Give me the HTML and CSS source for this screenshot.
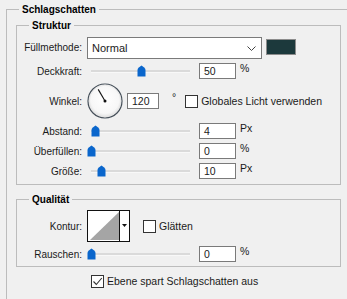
FILE: index.html
```html
<!DOCTYPE html>
<html>
  <head>
    <link rel="stylesheet" href="styles.css">
  </head>
  <body>
    <fieldset class="group outer">
      <legend>Schlagschatten</legend>

      <fieldset class="group inner struktur">
        <legend>Struktur</legend>

        <div class="row row-mode">
          <label class="lbl">Füllmethode:</label>
          <div class="select">
            <span>Normal</span>
            <svg class="chevron" width="9" height="5" viewBox="0 0 9 5">
              <path d="M0.5 0.5 L4.5 4.5 L8.5 0.5" fill="none" stroke="#444" stroke-width="1"/>
            </svg>
          </div>
          <div class="swatch"></div>
        </div>

        <div class="row">
          <label class="lbl">Deckkraft:</label>
          <div class="slider">
            <div class="track"></div>
            <svg class="thumb" style="left: 50px" width="9" height="12" viewBox="0 0 9 12">
              <path d="M0.5 11.5 V5 Q0.5 3.6 1.8 2.5 L4.5 0.4 L7.2 2.5 Q8.5 3.6 8.5 5 V11.5 Z" fill="#0a66cc"/>
            </svg>
          </div>
          <div class="num">50</div>
          <span class="unit">%</span>
        </div>

        <div class="row row-angle">
          <label class="lbl">Winkel:</label>
          <svg class="dial" width="36" height="36" viewBox="0 0 36 36">
            <defs>
              <radialGradient id="dialFill" cx="50%" cy="45%" r="55%">
                <stop offset="0%" stop-color="#ffffff"/>
                <stop offset="75%" stop-color="#f7f7f7"/>
                <stop offset="100%" stop-color="#dcdcdc"/>
              </radialGradient>
            </defs>
            <circle cx="18" cy="18" r="17" fill="url(#dialFill)" stroke="#46505a" stroke-width="1.2"/>
            <circle cx="18" cy="18" r="15.8" fill="none" stroke="#e4e4e4" stroke-width="0.8"/>
            <line x1="18" y1="18" x2="11.2" y2="6.4" stroke="#111" stroke-width="1.1"/>
            <circle cx="18" cy="18" r="1.5" fill="#111"/>
          </svg>
          <div class="num num-angle">120</div>
          <span class="unit unit-deg">°</span>
          <span class="check"></span>
          <span class="check-text">Globales Licht verwenden</span>
        </div>

        <div class="row">
          <label class="lbl">Abstand:</label>
          <div class="slider">
            <div class="track"></div>
            <svg class="thumb" style="left: 4px" width="9" height="12" viewBox="0 0 9 12">
              <path d="M0.5 11.5 V5 Q0.5 3.6 1.8 2.5 L4.5 0.4 L7.2 2.5 Q8.5 3.6 8.5 5 V11.5 Z" fill="#0a66cc"/>
            </svg>
          </div>
          <div class="num">4</div>
          <span class="unit">Px</span>
        </div>

        <div class="row">
          <label class="lbl">Überfüllen:</label>
          <div class="slider">
            <div class="track"></div>
            <svg class="thumb" style="left: 0px" width="9" height="12" viewBox="0 0 9 12">
              <path d="M0.5 11.5 V5 Q0.5 3.6 1.8 2.5 L4.5 0.4 L7.2 2.5 Q8.5 3.6 8.5 5 V11.5 Z" fill="#0a66cc"/>
            </svg>
          </div>
          <div class="num">0</div>
          <span class="unit">%</span>
        </div>

        <div class="row">
          <label class="lbl">Größe:</label>
          <div class="slider">
            <div class="track"></div>
            <svg class="thumb" style="left: 10px" width="9" height="12" viewBox="0 0 9 12">
              <path d="M0.5 11.5 V5 Q0.5 3.6 1.8 2.5 L4.5 0.4 L7.2 2.5 Q8.5 3.6 8.5 5 V11.5 Z" fill="#0a66cc"/>
            </svg>
          </div>
          <div class="num">10</div>
          <span class="unit">Px</span>
        </div>
      </fieldset>

      <fieldset class="group inner quality">
        <legend>Qualität</legend>

        <div class="row row-contour">
          <label class="lbl">Kontur:</label>
          <svg class="contour" width="43" height="32" viewBox="0 0 43 32">
            <rect x="0.5" y="0.5" width="42" height="31" fill="#fff" stroke="#111"/>
            <polygon points="3,30 32,2 32,30" fill="#a5a5a5"/>
            <line x1="32.5" y1="0" x2="32.5" y2="32" stroke="#111"/>
            <polygon points="35,14 40,14 37.5,17" fill="#111"/>
          </svg>
          <span class="check check-smooth"></span>
          <span class="check-text">Glätten</span>
        </div>

        <div class="row">
          <label class="lbl">Rauschen:</label>
          <div class="slider">
            <div class="track"></div>
            <svg class="thumb" style="left: 0px" width="9" height="12" viewBox="0 0 9 12">
              <path d="M0.5 11.5 V5 Q0.5 3.6 1.8 2.5 L4.5 0.4 L7.2 2.5 Q8.5 3.6 8.5 5 V11.5 Z" fill="#0a66cc"/>
            </svg>
          </div>
          <div class="num">0</div>
          <span class="unit">%</span>
        </div>
      </fieldset>

      <div class="row row-knockout">
        <span class="check checked">
          <svg width="11" height="11" viewBox="0 0 11 11">
            <path d="M1.5 5.5 L4.3 8.5 L9.8 2" fill="none" stroke="#333" stroke-width="1.1"/>
          </svg>
        </span>
        <span class="check-text">Ebene spart Schlagschatten aus</span>
      </div>
    </fieldset>
  </body>
</html>
```

FILE: styles.css
```css
body {
  margin: 0;
  background-color: #f0f0f0;
  font-family: "Liberation Sans", Arial, sans-serif;
  font-size: 10px;
  color: #1a1a1a;
  overflow: hidden;
}

.group {
  border: 1px solid #bcbcbc;
  min-inline-size: 0;
}
.group legend {
  font-weight: bold;
  line-height: 13px;
  padding: 0 3px;
  color: #000;
}

.outer {
  margin: 3px -20px 0 6px;
  padding: 3px 0 40px 9px;
}
.outer > legend {
  margin-left: 3px;
}

.inner {
  width: 323px;
  margin: 0;
  padding: 5px 0 5px 0;
}
.inner legend {
  margin-left: 12px;
}
.quality {
  margin-top: 8px;
  padding: 4px 0 4px 0;
}

.row {
  display: flex;
  align-items: center;
  height: 16px;
  margin-top: 4px;
}
.lbl {
  width: 65px;
  text-align: right;
  margin-right: 5px;
  flex-shrink: 0;
}

.row-mode {
  height: 22px;
  margin-top: 0;
  align-items: flex-start;
}
.select {
  height: 20px;
  border: 1px solid #7a7a7a;
  background-color: #fff;
  display: flex;
  align-items: center;
  justify-content: space-between;
  padding: 0 5px 0 4px;
  width: 164px;
  font-size: 11px;
}
.row-mode .lbl {
  line-height: 22px;
}
.swatch {
  width: 28px;
  height: 14px;
  margin: 2px 0 0 4px;
  border: 1px solid #8c8c8c;
  background-color: #1c393c;
}

.slider {
  position: relative;
  width: 104px;
  height: 16px;
  margin-right: 8px;
}
.track {
  position: absolute;
  left: 4px;
  right: 1px;
  top: 7px;
  height: 2px;
  background-color: #dadada;
  border-bottom: 1px solid #f8f8f8;
}
.thumb {
  position: absolute;
  top: 2px;
}

.num {
  width: 31px;
  height: 14px;
  line-height: 14px;
  border: 1px solid #7a7a7a;
  background-color: #fff;
  padding-left: 4px;
  font-size: 10.5px;
}
.unit {
  align-self: flex-start;
  margin-left: 4px;
  line-height: 11px;
  font-size: 10.5px;
}

.row-angle {
  height: 36px;
  margin-top: 4px;
}
.num-angle {
  width: 26px;
  margin-left: 4px;
}
.unit-deg {
  align-self: center;
  margin-left: 13px;
  margin-top: -8px;
}

.check {
  display: inline-flex;
  align-items: center;
  justify-content: center;
  width: 11px;
  height: 11px;
  border: 1px solid #333;
  background-color: #fff;
  margin-left: 9px;
  flex-shrink: 0;
}
.check-text {
  margin-left: 3px;
  white-space: nowrap;
  font-size: 10.5px;
}

.row-contour {
  height: 32px;
  margin-top: 0;
}
.check-smooth {
  margin-left: 13px;
}

.row-knockout {
  margin-top: 6px;
  padding-left: 75px;
}
.row-knockout .check {
  margin-left: 0;
}
```
